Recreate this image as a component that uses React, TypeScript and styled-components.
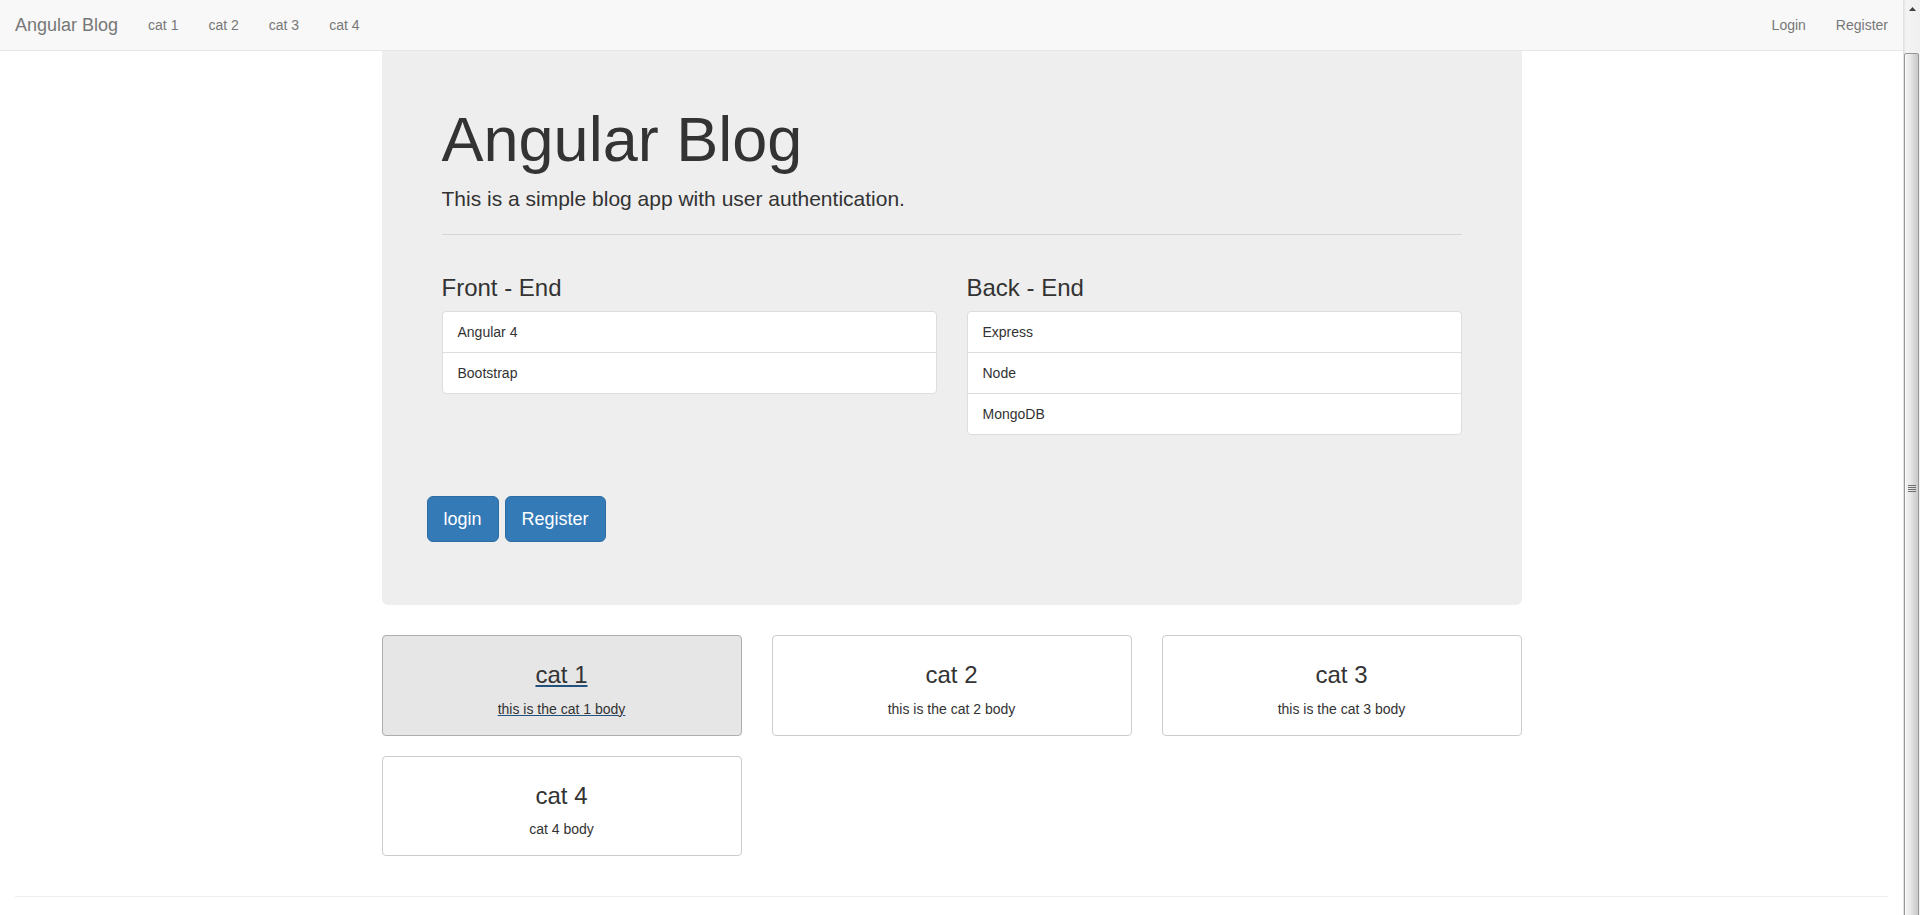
import React from "react";
import styled, { createGlobalStyle } from "styled-components";

const GlobalStyle = createGlobalStyle`
  html, body {
    margin: 0;
    padding: 0;
    height: 100%;
    overflow: hidden;
  }
  body {
    font-family: "Liberation Sans", Arial, Helvetica, sans-serif;
    font-size: 14px;
    line-height: 1.42857143;
    color: #333;
    background: #fff;
  }
  *, *::before, *::after { box-sizing: border-box; }
`;

const Shell = styled.div`
  display: flex;
  height: 100vh;
`;

const Page = styled.div`
  flex: 1;
  min-width: 0;
`;

/* ---------- navbar ---------- */
const Navbar = styled.nav`
  display: flex;
  justify-content: space-between;
  height: 51px;
  background: #f8f8f8;
  border-bottom: 1px solid #e7e7e7;
`;

const NavGroup = styled.div`
  display: flex;
`;

const Brand = styled.a`
  display: block;
  height: 50px;
  padding: 15px;
  font-size: 18px;
  line-height: 20px;
  color: #777;
  text-decoration: none;
`;

const NavLink = styled.a`
  display: block;
  padding: 15px;
  line-height: 20px;
  color: #777;
  text-decoration: none;
`;

/* ---------- jumbotron ---------- */
const Container = styled.div`
  width: 1140px;
  margin: 0 auto;
`;

const Jumbotron = styled.section`
  background: #eee;
  border-radius: 0 0 6px 6px;
  padding: 34px 60px 63px;
  margin-bottom: 30px;
  font-size: 21px;
  overflow: hidden;
`;

const Title = styled.h1`
  margin: 20px 0 10px;
  font-size: 63px;
  line-height: 69px;
  font-weight: 500;
  color: #333;
`;

const Lead = styled.p`
  margin: 0 0 15px;
  font-size: 21px;
  line-height: 30px;
  font-weight: 400;
`;

const Rule = styled.hr<{ $color: string }>`
  margin: 20px 0;
  border: 0;
  border-top: 1px solid ${(p) => p.$color};
  height: 0;
`;

const StackGrid = styled.div`
  display: grid;
  grid-template-columns: 1fr 1fr;
  column-gap: 30px;
  align-items: start;
`;

const StackColumn = styled.div`
  display: flow-root;
`;

const StackTitle = styled.h3`
  margin: 20px 0 10px;
  font-size: 24px;
  line-height: 26.4px;
  font-weight: 500;
`;

const ListGroup = styled.ul`
  list-style: none;
  margin: 0 0 20px;
  padding: 0;
  font-size: 14px;
`;

const ListItem = styled.li`
  display: block;
  padding: 10px 15px;
  line-height: 20px;
  background: #fff;
  border: 1px solid #ddd;
  margin-bottom: -1px;
  &:first-child {
    border-top-left-radius: 4px;
    border-top-right-radius: 4px;
  }
  &:last-child {
    margin-bottom: 0;
    border-bottom-left-radius: 4px;
    border-bottom-right-radius: 4px;
  }
`;

const ButtonBar = styled.div`
  display: flex;
  gap: 6px;
  margin: 41px 0 0 -15px;
`;

const PrimaryButton = styled.button`
  padding: 10px 16px;
  font-family: inherit;
  font-size: 18px;
  line-height: 24px;
  color: #fff;
  background: #337ab7;
  border: 1px solid #2e6da4;
  border-radius: 6px;
  cursor: pointer;
`;

/* ---------- category cards ---------- */
const CardGrid = styled.div`
  display: grid;
  grid-template-columns: repeat(3, 360px);
  column-gap: 30px;
  row-gap: 20px;
  margin-bottom: 20px;
`;

const CardLink = styled.a<{ $active?: boolean }>`
  display: block;
  color: ${(p) => (p.$active ? "#23527c" : "#337ab7")};
  text-decoration: ${(p) => (p.$active ? "underline" : "none")};
`;

const CardBox = styled.div<{ $active?: boolean }>`
  display: block;
  padding: 6px 12px;
  text-align: center;
  color: #333;
  background: ${(p) => (p.$active ? "#e6e6e6" : "#fff")};
  border: 1px solid ${(p) => (p.$active ? "#adadad" : "#ccc")};
  border-radius: 4px;
  white-space: nowrap;
`;

const CardTitle = styled.h3`
  margin: 20px 0 10px;
  font-size: 24px;
  line-height: 26.4px;
  font-weight: 500;
`;

const CardText = styled.p`
  margin: 0 0 10px;
  font-size: 14px;
  line-height: 20px;
`;

const Footer = styled.footer`
  display: flow-root;
  padding: 0 15px;
`;

/* ---------- scrollbar drawing ---------- */
const ScrollTrack = styled.div`
  width: 17px;
  height: 100vh;
  flex: none;
  display: flex;
  flex-direction: column;
  background: linear-gradient(to right, #e6e6e6 0, #f3f3f3 2px, #f0f0f0 100%);
  border-left: 1px solid #e2e2e2;
`;

const ScrollArrow = styled.div`
  height: 17px;
  display: flex;
  align-items: center;
  justify-content: center;
`;

const ScrollGap = styled.div`
  height: 36px;
`;

const ScrollThumb = styled.div`
  flex: 1;
  margin: 0 1px -8px 0;
  border: 1px solid #979797;
  border-radius: 2px;
  background: linear-gradient(
    to right,
    #f4f4f4 0,
    #e8e8e8 40%,
    #d6d6d6 70%,
    #c9c9c9 100%
  );
  box-shadow: inset 1px 0 0 #fbfbfb;
  display: flex;
  align-items: center;
  justify-content: center;
`;

const navLeft = ["cat 1", "cat 2", "cat 3", "cat 4"];

const frontEnd = ["Angular 4", "Bootstrap"];
const backEnd = ["Express", "Node", "MongoDB"];

const categories = [
  { title: "cat 1", body: "this is the cat 1 body", active: true },
  { title: "cat 2", body: "this is the cat 2 body" },
  { title: "cat 3", body: "this is the cat 3 body" },
  { title: "cat 4", body: "cat 4 body" },
];

export default function App() {
  return (
    <>
      <GlobalStyle />
      <Shell>
        <Page>
          <Navbar>
            <NavGroup>
              <Brand href="#">Angular Blog</Brand>
              {navLeft.map((c) => (
                <NavLink key={c} href="#">
                  {c}
                </NavLink>
              ))}
            </NavGroup>
            <NavGroup>
              <NavLink href="#">Login</NavLink>
              <NavLink href="#">Register</NavLink>
            </NavGroup>
          </Navbar>

          <Container>
            <Jumbotron>
              <Title>Angular Blog</Title>
              <Lead>This is a simple blog app with user authentication.</Lead>
              <Rule $color="#d5d5d5" />
              <StackGrid>
                <StackColumn>
                  <StackTitle>Front - End</StackTitle>
                  <ListGroup>
                    {frontEnd.map((t) => (
                      <ListItem key={t}>{t}</ListItem>
                    ))}
                  </ListGroup>
                </StackColumn>
                <StackColumn>
                  <StackTitle>Back - End</StackTitle>
                  <ListGroup>
                    {backEnd.map((t) => (
                      <ListItem key={t}>{t}</ListItem>
                    ))}
                  </ListGroup>
                </StackColumn>
              </StackGrid>
              <ButtonBar>
                <PrimaryButton>login</PrimaryButton>
                <PrimaryButton>Register</PrimaryButton>
              </ButtonBar>
            </Jumbotron>

            <CardGrid>
              {categories.map((c) => (
                <CardLink key={c.title} href="#" $active={c.active}>
                  <CardBox $active={c.active}>
                    <CardTitle>{c.title}</CardTitle>
                    <CardText>{c.body}</CardText>
                  </CardBox>
                </CardLink>
              ))}
            </CardGrid>
          </Container>

          <Footer>
            <Rule $color="#eee" />
          </Footer>
        </Page>

        <ScrollTrack>
          <ScrollArrow>
            <svg width="7" height="4" viewBox="0 0 7 4">
              <path d="M0 4 L3.5 0 L7 4 Z" fill="#404040" />
            </svg>
          </ScrollArrow>
          <ScrollGap />
          <ScrollThumb>
            <svg width="8" height="7" viewBox="0 0 8 7">
              <path
                d="M0 0.5 H8 M0 2.5 H8 M0 4.5 H8 M0 6.5 H8"
                stroke="#6f6f6f"
                strokeWidth="1"
              />
            </svg>
          </ScrollThumb>
        </ScrollTrack>
      </Shell>
    </>
  );
}
